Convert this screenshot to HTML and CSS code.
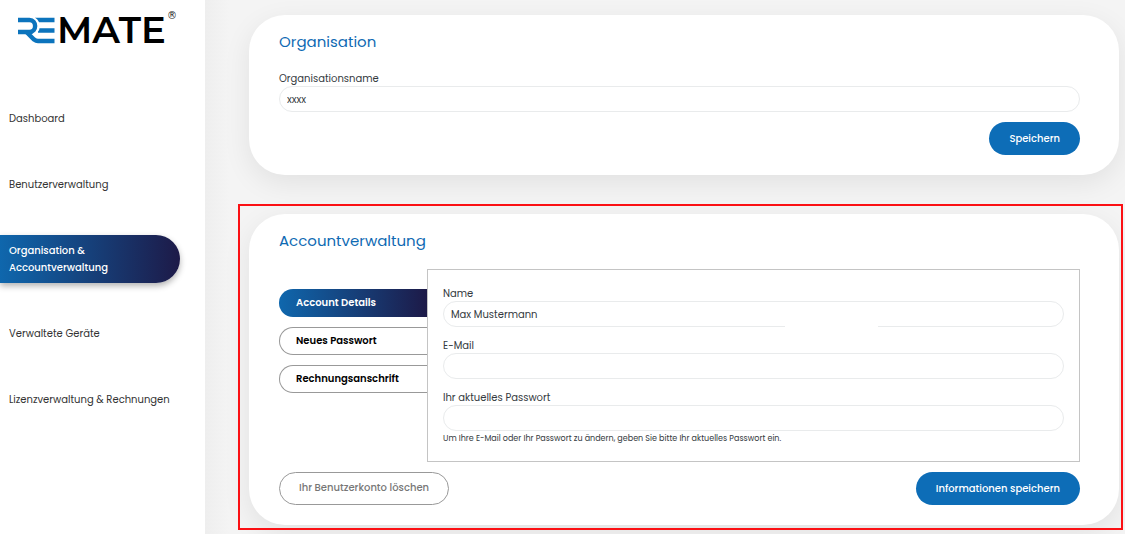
FILE: index.html
```html
<!DOCTYPE html>
<html lang="de">
<head>
<meta charset="utf-8">
<title>REMATE – Organisation &amp; Accountverwaltung</title>
<link rel="stylesheet" href="styles.css">
</head>
<body>
<div class="app">
  <aside class="sidebar">
    <svg class="logo" viewBox="0 0 160 36" role="img" aria-label="REMATE">
      <g fill="none" stroke="#0c74bd" stroke-width="4.400">
        <path d="M17 9H36.500M20 19.500H36.500"/>
        <path d="M0 9H12C20.500 9 20.500 21 12 21H0" stroke="#fff" stroke-width="7"/>
        <path d="M0 9H11.500C19 9 19 21 11.500 21H0"/>
        <path d="M8 20.500L16 28.500Q18 30 20 30H36.500"/>
      </g>
      <text class="logo-text" x="39" y="32">MATE</text>
      <text class="logo-mark" x="149" y="8">®</text>
    </svg>
    <nav class="nav">
      <a class="nav-item" href="#">Dashboard</a>
      <a class="nav-item" href="#">Benutzerverwaltung</a>
      <a class="nav-item active" href="#" aria-current="page">Organisation &amp;<br>Accountverwaltung</a>
      <a class="nav-item" href="#">Verwaltete Geräte</a>
      <a class="nav-item" href="#">Lizenzverwaltung &amp; Rechnungen</a>
    </nav>
  </aside>
  <main class="main">
    <form class="card">
      <h2 class="title">Organisation</h2>
      <div class="field">
        <label for="org">Organisationsname</label>
        <input class="input" id="org" type="text" value="xxxx">
      </div>
      <div class="actions end">
        <button class="btn primary" type="button">Speichern</button>
      </div>
    </form>
    <form class="card highlighted">
      <h2 class="title">Accountverwaltung</h2>
      <div class="account">
        <div class="tabs" role="tablist">
          <button class="tab selected" type="button" role="tab" aria-selected="true">Account Details</button>
          <button class="tab" type="button" role="tab" aria-selected="false">Neues Passwort</button>
          <button class="tab" type="button" role="tab" aria-selected="false">Rechnungsanschrift</button>
        </div>
        <div class="panel" role="tabpanel">
          <div class="field gap-line">
            <label for="name">Name</label>
            <input class="input" id="name" type="text" value="Max Mustermann">
          </div>
          <div class="field">
            <label for="mail">E-Mail</label>
            <input class="input" id="mail" type="email">
          </div>
          <div class="field">
            <label for="pw">Ihr aktuelles Passwort</label>
            <input class="input" id="pw" type="password" aria-describedby="pw-help">
            <small class="help" id="pw-help">Um Ihre E-Mail oder Ihr Passwort zu ändern, geben Sie bitte Ihr aktuelles Passwort ein.</small>
          </div>
        </div>
      </div>
      <div class="actions">
        <button class="btn outline" type="button">Ihr Benutzerkonto löschen</button>
        <button class="btn primary" type="button">Informationen speichern</button>
      </div>
    </form>
  </main>
</div>
</body>
</html>
```
FILE: styles.css
```css
* {
  box-sizing: border-box;
}

body {
  margin: 0;
  background: #f3f3f3;
  color: #343a40;
  font: 10px/16px Poppins, Inter, sans-serif;
}

button,
input {
  font: inherit;
  color: inherit;
}

.app {
  display: flex;
  min-height: 100vh;
}

.sidebar {
  flex: 0 0 205px;
  padding-top: 11px;
  background: #fff;
}

.logo {
  display: block;
  width: 160px;
  height: 36px;
  margin-left: 18px;
  overflow: visible;
}

.logo-text {
  font: 600 37px Montserrat, Poppins, Inter, sans-serif;
  fill: #000;
}

.logo-mark {
  font: 10px "DejaVu Sans", sans-serif;
  fill: #222;
}

.nav {
  display: flex;
  flex-direction: column;
  gap: 35px;
  margin-top: 56px;
}

.nav-item {
  padding: 7px 8px 7px 9px;
  color: #333;
  line-height: 17px;
  text-decoration: none;
}

.nav-item.active {
  width: 180px;
  border-radius: 0 24px 24px 0;
  background: linear-gradient(90deg, #0f67ad, #1d1a48);
  box-shadow: 0 3px 6px rgba(0, 0, 0, 0.3);
  color: #fff;
  font-weight: 500;
}

.main {
  flex: 1;
  min-width: 0;
  display: flex;
  flex-direction: column;
  gap: 39px;
  padding: 15px 6px 9px 44px;
  background: linear-gradient(90deg, #eee, #f4f4f4 24px);
}

.card {
  position: relative;
  padding: 15px 39px 20px 30px;
  border-radius: 36px;
  background: #fff;
  box-shadow: 0 8px 28px rgba(0, 0, 0, 0.08);
}

.highlighted::after {
  content: "";
  position: absolute;
  inset: -10px -4px -5px -11px;
  border: 2px solid #fb1014;
  pointer-events: none;
}

.title {
  margin: 0 0 16px;
  color: #0f6ab3;
  font-size: 15px;
  font-weight: 400;
  line-height: 24px;
}

.field {
  display: flex;
  flex-direction: column;
}

.field label {
  padding-top: 2px;
  line-height: 14px;
}

.input {
  width: 100%;
  height: 26px;
  padding: 1px 7px 0;
  border: 1px solid #e9ebec;
  border-radius: 13px;
  background: #fff;
}

.gap-line {
  position: relative;
}

.gap-line::after {
  content: "";
  position: absolute;
  left: 55%;
  bottom: 0;
  width: 15%;
  height: 1px;
  background: #fff;
}

.actions {
  display: flex;
  justify-content: space-between;
  margin-top: 10px;
}

.actions.end {
  justify-content: flex-end;
}

.btn {
  height: 33px;
  padding: 0 20px;
  border: 0;
  border-radius: 17px;
  font-weight: 500;
}

.primary {
  background: #0d6db7;
  color: #fff;
}

.outline {
  padding: 0 19px 1px;
  border: 1px solid #999;
  background: #fff;
  color: #777;
}

.account {
  display: flex;
}

.tabs {
  flex: 0 0 148px;
  display: flex;
  flex-direction: column;
  gap: 10px;
  padding-top: 20px;
}

.tab {
  height: 28px;
  padding: 0 16px 1px;
  border: 1px solid #999;
  border-right: 0;
  border-radius: 14px 0 0 14px;
  background: #fff;
  color: #000;
  font-weight: 600;
  text-align: left;
}

.tab.selected {
  border-color: transparent;
  background: linear-gradient(90deg, #0f67ad, #1d1a48) border-box;
  color: #fff;
}

.panel {
  flex: 1;
  min-width: 0;
  display: flex;
  flex-direction: column;
  gap: 10px;
  padding: 15px;
  border: 1px solid #c4c4c4;
}

.help {
  font-size: 8px;
  line-height: 15px;
}
```
